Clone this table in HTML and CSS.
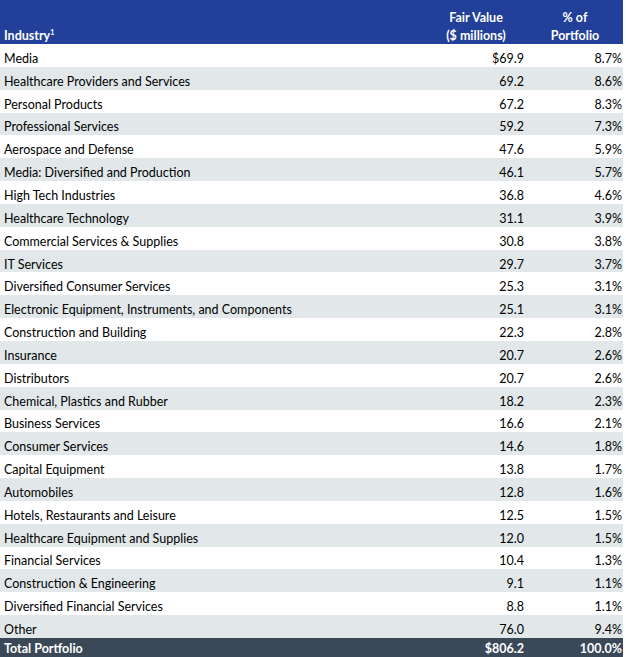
FILE: index.html
```html
<!DOCTYPE html>
<html>
<head>
<meta charset="utf-8">
<link rel="stylesheet" href="styles.css">
</head>
<body>
<div class="table">
  <div class="row head">
    <div class="c name">Industry<sup>1</sup></div>
    <div class="c fv">Fair Value<br>($ millions)</div>
    <div class="c pct">% of<br>Portfolio</div>
  </div>
  <div class="row"><div class="c name">Media</div><div class="c fv">$69.9</div><div class="c pct">8.7%</div></div>
  <div class="row alt"><div class="c name">Healthcare Providers and Services</div><div class="c fv">69.2</div><div class="c pct">8.6%</div></div>
  <div class="row"><div class="c name">Personal Products</div><div class="c fv">67.2</div><div class="c pct">8.3%</div></div>
  <div class="row alt"><div class="c name">Professional Services</div><div class="c fv">59.2</div><div class="c pct">7.3%</div></div>
  <div class="row"><div class="c name">Aerospace and Defense</div><div class="c fv">47.6</div><div class="c pct">5.9%</div></div>
  <div class="row alt"><div class="c name">Media: Diversified and Production</div><div class="c fv">46.1</div><div class="c pct">5.7%</div></div>
  <div class="row"><div class="c name">High Tech Industries</div><div class="c fv">36.8</div><div class="c pct">4.6%</div></div>
  <div class="row alt"><div class="c name">Healthcare Technology</div><div class="c fv">31.1</div><div class="c pct">3.9%</div></div>
  <div class="row"><div class="c name">Commercial Services &amp; Supplies</div><div class="c fv">30.8</div><div class="c pct">3.8%</div></div>
  <div class="row alt"><div class="c name">IT Services</div><div class="c fv">29.7</div><div class="c pct">3.7%</div></div>
  <div class="row"><div class="c name">Diversified Consumer Services</div><div class="c fv">25.3</div><div class="c pct">3.1%</div></div>
  <div class="row alt"><div class="c name">Electronic Equipment, Instruments, and Components</div><div class="c fv">25.1</div><div class="c pct">3.1%</div></div>
  <div class="row"><div class="c name">Construction and Building</div><div class="c fv">22.3</div><div class="c pct">2.8%</div></div>
  <div class="row alt"><div class="c name">Insurance</div><div class="c fv">20.7</div><div class="c pct">2.6%</div></div>
  <div class="row"><div class="c name">Distributors</div><div class="c fv">20.7</div><div class="c pct">2.6%</div></div>
  <div class="row alt"><div class="c name">Chemical, Plastics and Rubber</div><div class="c fv">18.2</div><div class="c pct">2.3%</div></div>
  <div class="row"><div class="c name">Business Services</div><div class="c fv">16.6</div><div class="c pct">2.1%</div></div>
  <div class="row alt"><div class="c name">Consumer Services</div><div class="c fv">14.6</div><div class="c pct">1.8%</div></div>
  <div class="row"><div class="c name">Capital Equipment</div><div class="c fv">13.8</div><div class="c pct">1.7%</div></div>
  <div class="row alt"><div class="c name">Automobiles</div><div class="c fv">12.8</div><div class="c pct">1.6%</div></div>
  <div class="row"><div class="c name">Hotels, Restaurants and Leisure</div><div class="c fv">12.5</div><div class="c pct">1.5%</div></div>
  <div class="row alt"><div class="c name">Healthcare Equipment and Supplies</div><div class="c fv">12.0</div><div class="c pct">1.5%</div></div>
  <div class="row"><div class="c name">Financial Services</div><div class="c fv">10.4</div><div class="c pct">1.3%</div></div>
  <div class="row alt"><div class="c name">Construction &amp; Engineering</div><div class="c fv">9.1</div><div class="c pct">1.1%</div></div>
  <div class="row"><div class="c name">Diversified Financial Services</div><div class="c fv">8.8</div><div class="c pct">1.1%</div></div>
  <div class="row alt"><div class="c name">Other</div><div class="c fv">76.0</div><div class="c pct">9.4%</div></div>
  <div class="row total"><div class="c name">Total Portfolio</div><div class="c fv">$806.2</div><div class="c pct">100.0%</div></div>
</div>
</body>
</html>
```
FILE: styles.css
```css
html, body {
  margin: 0;
  padding: 0;
  background: #ffffff;
}
body {
  font-family: Lato, "Open Sans", "Liberation Sans", sans-serif;
  font-size: 12.5px;
  color: #000000;
}
.table {
  width: 623px;
  display: flex;
  flex-direction: column;
}
.row {
  display: grid;
  grid-template-columns: 425px 102px 96px;
  height: 22.85px;
  align-items: center;
}
.row .c {
  padding-top: 6px;
  white-space: nowrap;
}
.alt {
  background: #e2e8ea;
}
.name {
  padding-left: 4px;
}
.fv {
  text-align: right;
  padding-right: 3px;
}
.pct {
  text-align: right;
  padding-right: 1px;
}
.head {
  height: 44px;
  background: #22409a;
  color: #ffffff;
  font-weight: bold;
  align-items: start;
  line-height: 18px;
}
.row.head .c {
  padding-top: 9px;
}
.row.head .name {
  padding-top: 27px;
}
.head .fv,
.head .pct {
  text-align: center;
  padding-right: 0;
}
.head sup {
  font-size: 7px;
  vertical-align: 5px;
  line-height: 0;
}
.total {
  background: #3b4858;
  color: #ffffff;
  font-weight: bold;
  height: 19px;
}
.row.total .c {
  padding-top: 2px;
}
```
